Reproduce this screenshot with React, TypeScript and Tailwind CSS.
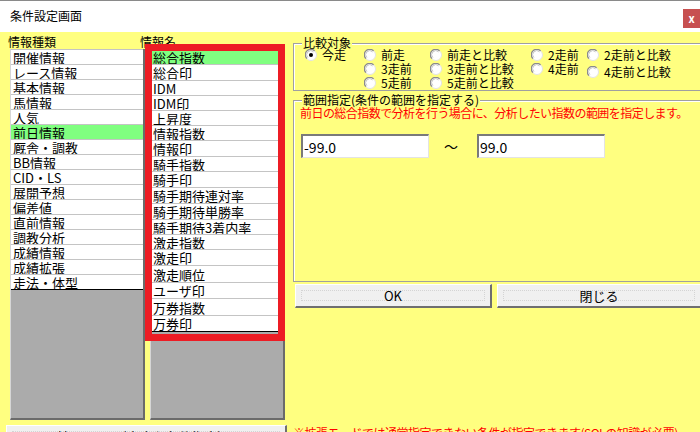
import React from "react";
import clsx from "clsx";

const KINDS = [
  "開催情報",
  "レース情報",
  "基本情報",
  "馬情報",
  "人気",
  "前日情報",
  "厩舎・調教",
  "BB情報",
  "CID・LS",
  "展開予想",
  "偏差値",
  "直前情報",
  "調教分析",
  "成績情報",
  "成績拡張",
  "走法・体型",
];
const SELECTED_KIND = "前日情報";

// row heights are uneven in the original dialog, keep them as drawn
const NAMES: { label: string; h: string }[] = [
  { label: "総合指数", h: "h-[15px]" },
  { label: "総合印", h: "h-[16px]" },
  { label: "IDM", h: "h-[15px]" },
  { label: "IDM印", h: "h-[15px]" },
  { label: "上昇度", h: "h-[15px]" },
  { label: "情報指数", h: "h-[15px]" },
  { label: "情報印", h: "h-[16px]" },
  { label: "騎手指数", h: "h-[15px]" },
  { label: "騎手印", h: "h-[16px]" },
  { label: "騎手期待連対率", h: "h-[16px]" },
  { label: "騎手期待単勝率", h: "h-[16px]" },
  { label: "騎手期待3着内率", h: "h-[15px]" },
  { label: "激走指数", h: "h-[15px]" },
  { label: "激走印", h: "h-[16px]" },
  { label: "激走順位", h: "h-[17px]" },
  { label: "ユーザ印", h: "h-[16px]" },
  { label: "万券指数", h: "h-[17px]" },
  { label: "万券印", h: "h-[16px]" },
];
const SELECTED_NAME = "総合指数";

function RadioDot({ checked }: { checked?: boolean }) {
  return (
    <svg width="12" height="12" viewBox="0 0 12 12" className="shrink-0">
      <circle cx="6" cy="6" r="5.5" fill="#fff" stroke="#e3e3e3" />
      <path d="M1.9 9.6 A5.2 5.2 0 0 1 9.6 1.9" fill="none" stroke="#8a8a8a" strokeWidth="1.2" />
      <path d="M2.9 8.6 A4 4 0 0 1 8.6 2.9" fill="none" stroke="#c8c8c8" strokeWidth="1" />
      {checked && <circle cx="6" cy="6" r="2" fill="#000" />}
    </svg>
  );
}

function Radio({ label, checked, className }: { label: string; checked?: boolean; className?: string }) {
  return (
    <div className={clsx("flex h-[14px] items-center gap-[5px] whitespace-nowrap", className)}>
      <RadioDot checked={checked} />
      <span className="text-[12px] leading-[14px]">{label}</span>
    </div>
  );
}

function ListBox({ items, selected }: { items: { label: string; h: string }[]; selected: string }) {
  return (
    <div className="flex h-[371px] w-[135px] flex-col border-r-2 border-b-2 border-l border-r-[#6b6b6b] border-b-[#6b6b6b] border-l-[#d6d6d6] bg-[#ababab]">
      {items.map((it) => (
        <div
          key={it.label}
          className={clsx(
            "flex items-center border-t border-[#c4c4c4] pl-[2px] text-[13px] leading-[15px] whitespace-nowrap",
            it.h,
            it.label === selected ? "bg-[#80ff80]" : "bg-white"
          )}
        >
          {it.label}
        </div>
      ))}
      <div className="h-px bg-black" />
    </div>
  );
}

function TextBox({ value }: { value: string }) {
  return (
    <div className="flex h-[24px] w-[128px] items-center border-t-2 border-l-2 border-r border-b border-t-[#7a7a7a] border-l-[#7a7a7a] border-r-[#e3e3e3] border-b-[#e3e3e3] bg-white pl-px text-[14px] leading-none">
      {value}
    </div>
  );
}

function ClassicButton({ children, className }: { children: React.ReactNode; className?: string }) {
  return (
    <button
      className={clsx(
        "relative flex h-[24px] shrink-0 items-center justify-center border-t border-l border-r-2 border-b-2 border-t-white border-l-white border-r-[#6f6f6f] border-b-[#6f6f6f] bg-[#f0f0f0] text-[13px] leading-none",
        className
      )}
    >
      <span className="absolute inset-[5px] border border-dotted border-[#d4d4d4]" />
      <span className="relative">{children}</span>
    </button>
  );
}

export default function App() {
  return (
    <div className="relative h-[432px] w-[700px] overflow-hidden bg-[#ffff80] font-['Noto_Sans_CJK_JP',sans-serif] text-black">
      {/* title bar */}
      <div className="flex h-[32px] items-start justify-between border-t border-[#8a8a8a] bg-white">
        <div className="pl-[10px] pt-[8px] text-[12px] leading-[14px]">条件設定画面</div>
        <div className="mt-[8px] flex h-[19px] w-[17px] items-center justify-center bg-[#c75050] text-[11px] font-bold leading-none text-white">
          x
        </div>
      </div>

      <div className="flex">
        {/* left: the two lists */}
        <div className="w-[285px] shrink-0">
          <div className="flex h-[17px] items-end text-[12px] leading-[15px]">
            <span className="w-[140px] pl-[8px]">情報種類</span>
            <span>情報名</span>
          </div>
          <div className="flex gap-[5px] pl-[10px]">
            <ListBox items={KINDS.map((k) => ({ label: k, h: "h-[15px]" }))} selected={SELECTED_KIND} />
            <ListBox items={NAMES} selected={SELECTED_NAME} />
          </div>
        </div>

        {/* right: conditions */}
        <div className="ml-[8px] w-[412px] shrink-0 pt-[5px]">
          <fieldset className="h-[54px] border border-[#a0a0a0] pl-[7px] shadow-[inset_1px_1px_0_#ffffff]">
            <legend className="ml-px bg-[#ffff80] px-px text-[12px] leading-[12px]">比較対象</legend>
            <div className="-mt-px ml-[4px] grid grid-cols-[59px_66px_101px_56px_1fr] grid-rows-[14px_14px_14px]">
              <Radio label="今走" checked />
              <Radio label="前走" />
              <Radio label="前走と比較" />
              <Radio label="2走前" />
              <Radio label="2走前と比較" />
              <div />
              <Radio label="3走前" />
              <Radio label="3走前と比較" />
              <Radio label="4走前" />
              <Radio label="4走前と比較" className="mt-[3px]" />
              <div />
              <Radio label="5走前" />
              <Radio label="5走前と比較" />
            </div>
          </fieldset>

          <fieldset className="mt-[3px] h-[188px] border border-[#a0a0a0] pl-[7px] shadow-[inset_1px_1px_0_#ffffff]">
            <legend className="ml-px bg-[#ffff80] px-px text-[12px] leading-[12px]">範囲指定(条件の範囲を指定する)</legend>
            <p className="-ml-px text-[12px] leading-[14px] tracking-[-0.55px] whitespace-nowrap text-[#ff0000]">
              前日の総合指数で分析を行う場合に、分析したい指数の範囲を指定します。
            </p>
            <div className="mt-[14px] flex items-center">
              <TextBox value="-99.0" />
              <span className="w-[48px] pl-[15px] text-[14px] leading-none">〜</span>
              <TextBox value="99.0" />
            </div>
          </fieldset>

          <div className="mt-[2px] ml-[2px] flex gap-[5px]">
            <ClassicButton className="w-[197px]">OK</ClassicButton>
            <ClassicButton className="w-[205px]">閉じる</ClassicButton>
          </div>
        </div>
      </div>

      {/* bottom row, mostly cut off by the window */}
      <div className="mt-[5px] flex items-start">
        <ClassicButton className="ml-[6px] w-[281px] text-[12px]">拡張モード(高度な条件指定)へ</ClassicButton>
        <p className="ml-[6px] pt-[1px] text-[12px] leading-[14px] tracking-[-0.5px] whitespace-nowrap text-[#ff0000]">
          ※拡張モードでは通常指定できない条件が指定できます(SQLの知識が必要)
        </p>
      </div>

      {/* red annotation frame over the name list */}
      <div className="pointer-events-none absolute top-[44px] left-[145px] h-[297px] w-[140px] border-[7px] border-[#ed1c24]" />
    </div>
  );
}
